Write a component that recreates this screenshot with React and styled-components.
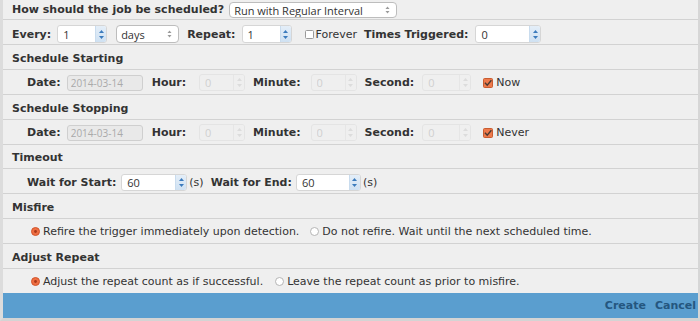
import React from "react";
import styled, { createGlobalStyle } from "styled-components";

const Global = createGlobalStyle`
  html, body { margin: 0; padding: 0; background: #efefef; }
  body { font-family: "DejaVu Sans", Verdana, sans-serif; font-size: 11px; color: #333; }
  * { box-sizing: border-box; }
`;

const Frame = styled.div`
  width: 700px;
  height: 321px;
  background: #efefef;
  border-left: 3px solid #dcdcdc;
  border-right: 2px solid #d6d6d6;
  border-bottom: 3px solid #d4d4d4;
  display: flex;
  flex-direction: column;
  overflow: hidden;
`;

const Row = styled.div`
  display: flex;
  align-items: center;
  height: ${(p) => p.$h || 25}px;
  padding-top: ${(p) => p.$pt || 0}px;
  padding-left: ${(p) => (p.$sub ? 24 : 9)}px;
  border-bottom: 1px solid #d2d2d2;
  flex-shrink: 0;
  white-space: nowrap;
`;

const Heading = styled.span`
  font-weight: bold;
  font-size: 11px;
  color: #333;
`;

const Label = styled.span`
  font-weight: bold;
  color: #333;
  margin-left: ${(p) => p.$ml || 0}px;
`;

const Text = styled.span`
  color: #333;
  margin-left: ${(p) => p.$ml || 0}px;
`;

const SelectBox = styled.div`
  position: relative;
  display: inline-flex;
  align-items: center;
  width: ${(p) => p.$w}px;
  height: ${(p) => p.$h}px;
  margin-left: ${(p) => p.$ml || 0}px;
  background: #fff;
  border: 1px solid #bdbdbd;
  border-radius: 4px;
`;

const NativeSelect = styled.select`
  appearance: none;
  -webkit-appearance: none;
  border: none;
  background: transparent;
  width: 100%;
  height: 100%;
  padding: 0 14px 0 4px;
  font-family: "Open Sans", "DejaVu Sans", sans-serif;
  font-size: 11px;
  color: #333;
  outline: none;
`;

const SelectArrows = styled.svg`
  position: absolute;
  right: 6px;
  top: 50%;
  transform: translateY(-50%);
  pointer-events: none;
`;

const SpinBox = styled.div`
  display: inline-flex;
  width: ${(p) => p.$w}px;
  height: ${(p) => p.$h || 17}px;
  margin-left: ${(p) => p.$ml || 0}px;
  border: 1px solid ${(p) => (p.$disabled ? "#e4e4e4" : "#d6d6d6")};
  border-radius: 3px;
  background: ${(p) => (p.$disabled ? "#efefef" : "#fff")};
  overflow: hidden;
`;

const SpinField = styled.input`
  flex: 1;
  min-width: 0;
  border: none;
  background: transparent;
  padding: 0 0 0 5px;
  font-family: "Open Sans", "DejaVu Sans", sans-serif;
  font-size: 11px;
  color: ${(p) => (p.disabled ? "#cfcfcf" : "#333")};
  outline: none;
`;

const Spinner = styled.div`
  width: 11px;
  display: flex;
  align-items: center;
  justify-content: center;
  border-left: 1px solid ${(p) => (p.$disabled ? "#e6e6e6" : "#c9dcee")};
  background: ${(p) => (p.$disabled ? "#efefef" : "linear-gradient(#e4eef8, #cfe1f2)")};
`;

const DateField = styled.input`
  width: ${(p) => p.$w}px;
  height: 16px;
  margin-left: ${(p) => p.$ml || 0}px;
  border: 1px solid #cfcfcf;
  border-radius: 3px;
  background: #e9e9e9;
  padding: 0 0 0 3px;
  font-family: "Open Sans", "DejaVu Sans", sans-serif;
  font-size: 10px;
  color: #aaa;
  outline: none;
`;

const Mark = styled.svg`
  flex-shrink: 0;
  margin-left: ${(p) => p.$ml || 0}px;
`;

const Footer = styled.div`
  height: 25px;
  background: #5a9ecf;
  display: flex;
  align-items: center;
  justify-content: flex-end;
  gap: 9px;
  padding-right: 2px;
  margin-top: -1px;
`;

const FooterButton = styled.button`
  border: none;
  background: none;
  padding: 0;
  font-family: "DejaVu Sans", Verdana, sans-serif;
  font-weight: bold;
  font-size: 11px;
  color: #24567f;
  cursor: pointer;
`;

function Select({ w, h, ml, value, options }) {
  return (
    <SelectBox $w={w} $h={h} $ml={ml}>
      <NativeSelect defaultValue={value}>
        {options.map((o) => (
          <option key={o}>{o}</option>
        ))}
      </NativeSelect>
      <SelectArrows width="5" height="9" viewBox="0 0 5 9">
        <path d="M0.5 3.5 L2.5 1 L4.5 3.5 Z" fill="#9a9a9a" />
        <path d="M0.5 5.5 L2.5 8 L4.5 5.5 Z" fill="#9a9a9a" />
      </SelectArrows>
    </SelectBox>
  );
}

function NumberInput({ w, h, ml, value, disabled }) {
  const c = disabled ? "#dcdcdc" : "#3b7bbd";
  return (
    <SpinBox $w={w} $h={h} $ml={ml} $disabled={disabled}>
      <SpinField value={value} readOnly disabled={disabled} />
      <Spinner $disabled={disabled}>
        <svg width="5" height="11" viewBox="0 0 5 11">
          <path d="M0 4 L2.5 1 L5 4 Z" fill={c} />
          <path d="M0 7 L2.5 10 L5 7 Z" fill={c} />
        </svg>
      </Spinner>
    </SpinBox>
  );
}

function CheckBox({ checked, ml }) {
  if (!checked)
    return (
      <Mark $ml={ml} width="9" height="9" viewBox="0 0 9 9">
        <rect x="0.5" y="0.5" width="8" height="8" rx="1" fill="#fff" stroke="#9a9a9a" />
      </Mark>
    );
  return (
    <Mark $ml={ml} width="10" height="10" viewBox="0 0 10 10">
      <rect x="0.5" y="0.5" width="9" height="9" rx="1" fill="#ee7a4c" stroke="#c85c30" />
      <path d="M2 4.8 L4.2 7.2 L8.4 2.2" fill="none" stroke="#4a3a33" strokeWidth="1.4" />
    </Mark>
  );
}

function Radio({ checked, ml }) {
  return (
    <Mark $ml={ml} width="9" height="9" viewBox="0 0 9 9">
      {checked ? (
        <>
          <circle cx="4.5" cy="4.5" r="4" fill="#ee6e42" stroke="#d3552b" />
          <circle cx="4.5" cy="4.5" r="1.4" fill="#a8381a" />
        </>
      ) : (
        <circle cx="4.5" cy="4.5" r="4" fill="#fff" stroke="#b5b5b5" />
      )}
    </Mark>
  );
}

function TimeRow({ endLabel }) {
  return (
    <Row $sub $pt={1}>
      <Label>Date:</Label>
      <DateField $w={76} $ml={6} value="2014-03-14" readOnly disabled />
      <Label $ml={9}>Hour:</Label>
      <NumberInput w={46} ml={13} value="0" disabled />
      <Label $ml={8}>Minute:</Label>
      <NumberInput w={46} ml={10} value="0" disabled />
      <Label $ml={8}>Second:</Label>
      <NumberInput w={49} ml={8} value="0" disabled />
      <CheckBox checked ml={12} />
      <Text $ml={3}>{endLabel}</Text>
    </Row>
  );
}

export default function App() {
  return (
    <Frame>
      <Global />
      <Row $h={20} $pt={0}>
        <Heading>How should the job be scheduled?</Heading>
        <Select
          w={168}
          h={16}
          ml={5}
          value="Run with Regular Interval"
          options={["Run with Regular Interval", "Run Once", "Run with Cron Expression"]}
        />
      </Row>
      <Row $pt={4}>
        <Label>Every:</Label>
        <NumberInput w={50} h={18} ml={6} value="1" />
        <Select w={63} h={18} ml={9} value="days" options={["seconds", "minutes", "hours", "days"]} />
        <Label $ml={8}>Repeat:</Label>
        <NumberInput w={50} h={18} ml={6} value="1" />
        <CheckBox ml={13} />
        <Text $ml={2}>Forever</Text>
        <Label $ml={7}>Times Triggered:</Label>
        <NumberInput w={66} h={18} ml={7} value="0" />
      </Row>
      <Row $pt={3}>
        <Heading>Schedule Starting</Heading>
      </Row>
      <TimeRow endLabel="Now" />
      <Row $pt={3}>
        <Heading>Schedule Stopping</Heading>
      </Row>
      <TimeRow endLabel="Never" />
      <Row $h={24} $pt={2}>
        <Heading>Timeout</Heading>
      </Row>
      <Row $sub $pt={3}>
        <Label>Wait for Start:</Label>
        <NumberInput w={66} ml={5} value="60" />
        <Text $ml={2}>(s)</Text>
        <Label $ml={7}>Wait for End:</Label>
        <NumberInput w={65} ml={4} value="60" />
        <Text $ml={2}>(s)</Text>
      </Row>
      <Row $pt={3}>
        <Heading>Misfire</Heading>
      </Row>
      <Row $sub $pt={1}>
        <Radio checked ml={4} />
        <Text $ml={3}>Refire the trigger immediately upon detection.</Text>
        <Radio ml={11} />
        <Text $ml={3}>Do not refire. Wait until the next scheduled time.</Text>
      </Row>
      <Row $pt={3}>
        <Heading>Adjust Repeat</Heading>
      </Row>
      <Row $sub $h={25} $pt={1}>
        <Radio checked ml={4} />
        <Text $ml={3}>Adjust the repeat count as if successful.</Text>
        <Radio ml={12} />
        <Text $ml={3}>Leave the repeat count as prior to misfire.</Text>
      </Row>
      <Footer>
        <FooterButton>Create</FooterButton>
        <FooterButton>Cancel</FooterButton>
      </Footer>
    </Frame>
  );
}
